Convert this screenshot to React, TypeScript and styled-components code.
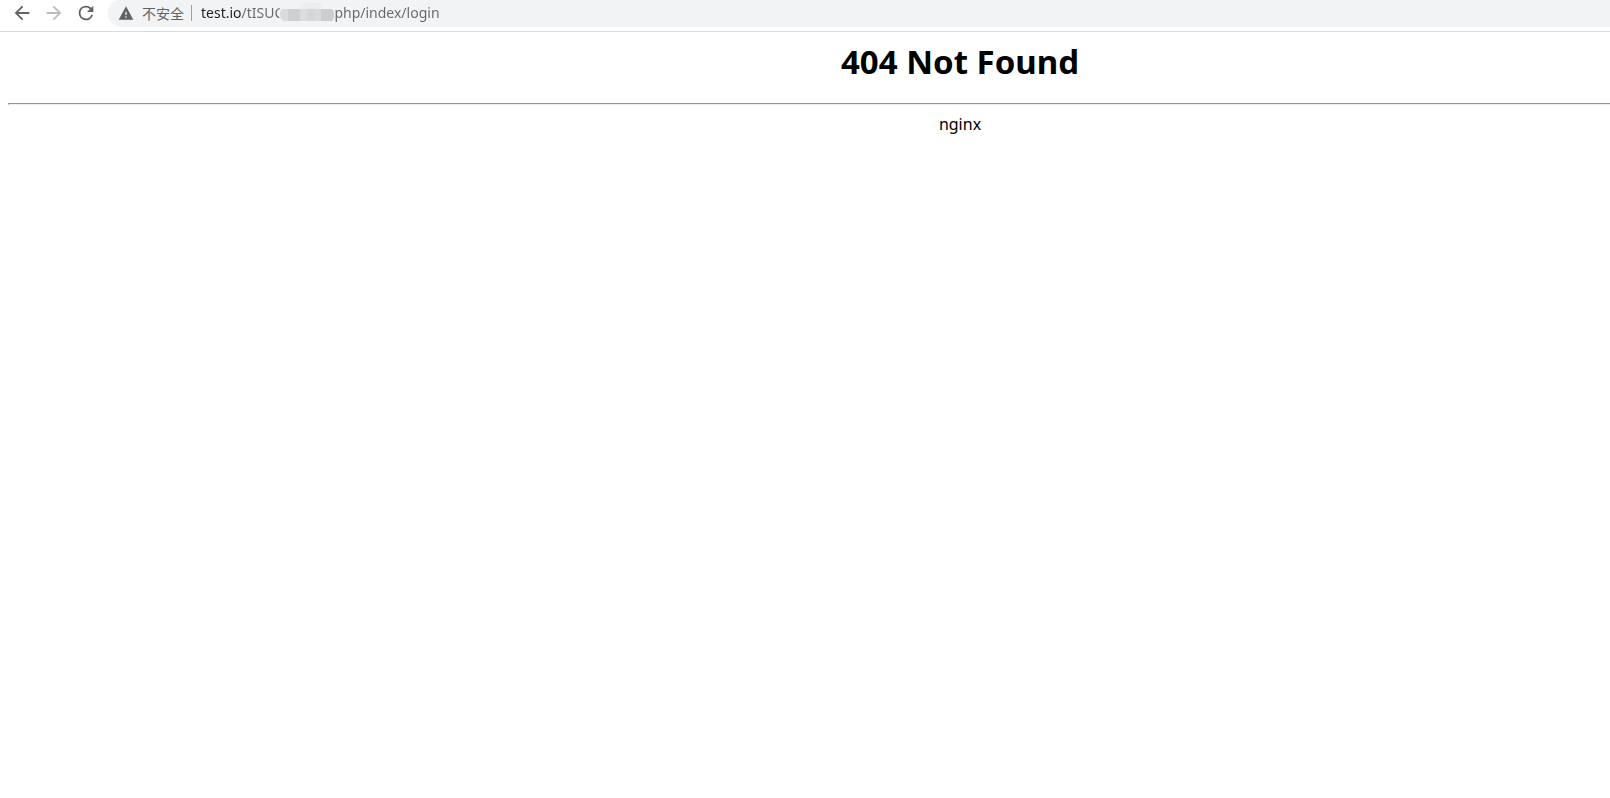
import React from "react";
import styled, { createGlobalStyle } from "styled-components";

const GlobalStyle = createGlobalStyle`
  *, *::before, *::after { box-sizing: border-box; }
  body {
    margin: 0;
    background: #fff;
    color: #000;
    font-family: "Noto Sans", "Noto Sans CJK SC", sans-serif;
  }
`;

const Toolbar = styled.header`
  display: flex;
  align-items: flex-start;
  height: 32px;
  border-bottom: 1px solid #d8d9da;
`;

const NavButtons = styled.nav`
  display: flex;
  padding-left: 6px;
`;

const NavButton = styled.button<{ $tone: string }>`
  display: flex;
  align-items: center;
  justify-content: center;
  width: 32px;
  height: 26px;
  padding: 0;
  border: 0;
  background: none;
  color: ${(p) => p.$tone};
  svg { display: block; fill: currentColor; }
`;

const AddressBar = styled.div`
  display: flex;
  align-items: center;
  flex: 1;
  height: 27px;
  margin-left: 6px;
  padding: 0 0 1px 10px;
  background: #f1f3f4;
  border-radius: 12px 0 0 14px;
`;

const SecurityChip = styled.button`
  display: flex;
  align-items: center;
  gap: 8px;
  height: 16px;
  padding: 0 7px 0 0;
  border: 0;
  border-right: 1px solid #9aa0a6;
  background: none;
  color: #5f6368;
  font: 14px/16px "Noto Sans CJK SC", sans-serif;
  svg { display: block; fill: currentColor; }
`;

const UrlField = styled.label`
  position: relative;
  flex: 1;
  display: flex;
  margin-left: 9px;
`;

const UrlInput = styled.input`
  width: 100%;
  height: 20px;
  padding: 0;
  border: 0;
  outline: 0;
  font: 14px/20px "Noto Sans", sans-serif;
  background: linear-gradient(to right, #202124 41px, #64686d 41px);
  background-clip: text;
  -webkit-background-clip: text;
  -webkit-text-fill-color: transparent;
`;

const Mosaic = styled.svg`
  position: absolute;
  left: 78px;
  top: -1px;
`;

const Viewport = styled.div`
  overflow: hidden;
`;

const Page = styled.main`
  margin: 0 -302px 0 8px;
  text-align: center;
`;

const Title = styled.h1`
  margin: 0;
  padding: 7px 0 19px;
  font-size: 33px;
  line-height: 45px;
  font-weight: 700;
`;

const Rule = styled.hr`
  height: 2px;
  margin: 0 0 7px;
  border: solid;
  border-width: 1px 0 1px 1px;
  border-color: #959595 #eeeeee #eeeeee #959595;
`;

const Server = styled.p`
  margin: 0;
  font-size: 16px;
  line-height: 24px;
`;

export default function App() {
  return (
    <>
      <GlobalStyle />
      <Toolbar>
        <NavButtons>
          <NavButton $tone="#5f6368" aria-label="Back">
            <svg width="22" height="22" viewBox="0 0 24 24"><path d="M20 11H7.83l5.59-5.59L12 4l-8 8 8 8 1.41-1.41L7.83 13H20z" /></svg>
          </NavButton>
          <NavButton $tone="#babcbe" aria-label="Forward" disabled>
            <svg width="22" height="22" viewBox="0 0 24 24"><path d="M12 4l-1.41 1.41L16.17 11H4v2h12.17l-5.58 5.59L12 20l8-8z" /></svg>
          </NavButton>
          <NavButton $tone="#5f6368" aria-label="Reload">
            <svg width="22" height="22" viewBox="0 0 24 24"><path d="M17.65 6.35A7.96 7.96 0 0 0 12 4a8 8 0 1 0 7.73 10h-2.08A6 6 0 1 1 12 6c1.66 0 3.14.69 4.22 1.78L13 11h7V4z" /></svg>
          </NavButton>
        </NavButtons>
        <AddressBar>
          <SecurityChip>
            <svg width="16" height="16" viewBox="0 0 24 24"><path d="M1 22h22L12 2zm12-3h-2v-2h2zm0-4h-2v-5h2z" /></svg>
            不安全
          </SecurityChip>
          <UrlField>
            <UrlInput aria-label="Address" defaultValue="test.io/tISUC             .php/index/login" spellCheck={false} />
            <Mosaic width="56" height="24" viewBox="0 0 56 24" aria-hidden="true">
              <rect width="56" height="24" rx="10" fill="#f1f3f4" />
              <path fill="#f1f3f4" d="M2 0h54v24H2z" />
              <path fill="#ebedee" d="M21 4q6-4 14-3h7v6H21z" />
              <path fill="#dadbdc" d="M3 7h6v12H4Q0 15 1 10z" />
              <path fill="#cdcfd1" d="M9 7h12v12H9z" />
              <path fill="#dcdddf" d="M21 7h7v12h-7z" />
              <path fill="#d4d6d8" d="M28 7h7v12h-7z" />
              <path fill="#d8dadc" d="M35 7h7v12h-7z" />
              <path fill="#cbcdcf" d="M42 7h11l2 3v6l-2 3H42z" />
            </Mosaic>
          </UrlField>
        </AddressBar>
      </Toolbar>
      <Viewport>
        <Page>
          <Title>404 Not Found</Title>
          <Rule />
          <Server>nginx</Server>
        </Page>
      </Viewport>
    </>
  );
}
